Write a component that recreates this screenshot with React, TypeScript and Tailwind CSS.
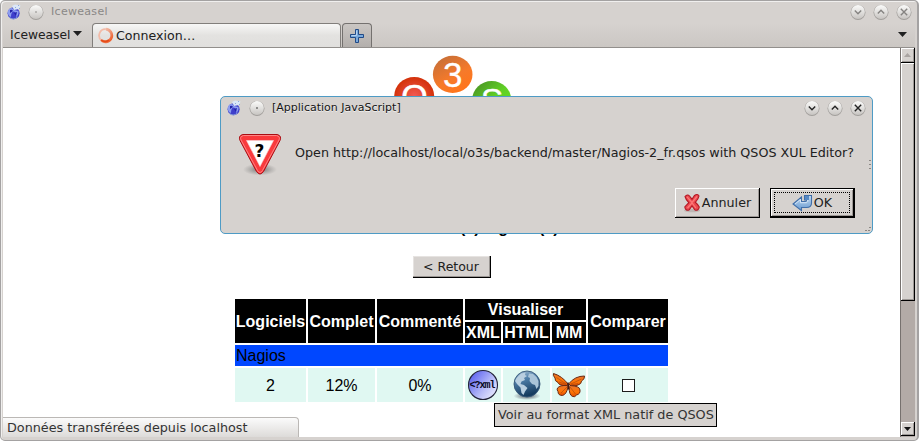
import React from 'react';

const ui = "font-['DejaVu_Sans',sans-serif]";
const arial = "font-['Liberation_Sans',Arial,sans-serif]";

function AppIcon() {
  return (
    <svg className="block shrink-0" width="16" height="16" viewBox="0 0 16 16">
      <circle cx="7.6" cy="9.2" r="6" fill="#3f3fcb" />
      <path d="M1.600 9 Q2 4 6 4 L8 6 L12.500 7 Q13 11 10 13 Q11 8 7.500 7.500 Q5 8 5 13 Q2 12 1.600 9Z" fill="#8c9df0" />
      <path d="M4 6 Q6 5 7 7 L4 9Z M8 9 L11 8 L10 12Z" fill="#2423a9" />
      <path d="M6 2 L9 .5 L14.500 1.500 L13 5 L8 6Z" fill="#dbe7f7" />
      <path d="M9 3h1v1H9zM12 1h1v1h-1zM13 4h1v1h-1z" fill="#8faadb" />
      <path d="M3 13 Q7 17 11.500 13" fill="none" stroke="#8ba0d8" />
    </svg>
  );
}

function Knob({ kind, active }: { kind: 'dot' | 'down' | 'up' | 'close'; active?: boolean }) {
  const c = active ? '#242424' : '#858381';
  const id = `knob-${kind}-${active ? 'a' : 'i'}`;
  return (
    <svg className="block shrink-0" width="16" height="16" viewBox="0 0 16 16">
      <defs>
        <linearGradient id={id} x1="0" y1="0" x2="0" y2="1">
          <stop offset="0" stopColor="#fbfbfa" />
          <stop offset="1" stopColor="#c8c5c2" />
        </linearGradient>
      </defs>
      <circle cx="8" cy="8.4" r="7.5" fill="#a19e9b" />
      <circle cx="8" cy="8" r="6.9" fill={`url(#${id})`} />
      {kind === 'dot' && <circle cx="8" cy="8" r="0.8" fill={c} />}
      {kind === 'down' && <path d="M4.800 6.500 L8 9.700 L11.200 6.500" fill="none" stroke={c} strokeWidth="1.4" />}
      {kind === 'up' && <path d="M4.800 9.500 L8 6.300 L11.200 9.500" fill="none" stroke={c} strokeWidth="1.4" />}
      {kind === 'close' && <path d="M4.800 4.800 L11.200 11.200 M11.200 4.800 L4.800 11.200" fill="none" stroke={c} strokeWidth="1.4" />}
    </svg>
  );
}

function TitleBar() {
  return (
    <div className="flex h-[23px] shrink-0 items-center pl-[3px] pr-[3px]">
      <AppIcon />
      <div className="ml-[6px]"><Knob kind="dot" /></div>
      <span className="ml-[7px] text-[11px] leading-[14px] tracking-[0.3px] text-[#8a8886]">Iceweasel</span>
      <div className="ml-auto flex gap-[7px]">
        <Knob kind="down" /><Knob kind="up" /><Knob kind="close" />
      </div>
    </div>
  );
}

function TabBar() {
  return (
    <div className="flex h-[25px] shrink-0 items-end border-b border-[#928f8c] bg-linear-to-b from-[#d6d2cf] to-[#cbc7c3]">
      <div className="flex h-[24px] w-[89px] items-center pl-[7px]">
        <span className="w-[61px] whitespace-nowrap text-[12.3px] leading-[16px] text-[#202020]">Iceweasel</span>
        <svg width="10" height="6" viewBox="0 0 10 6" className="ml-[2px] mb-[2px]"><path d="M0 0h9L4.5 5z" fill="#202020" /></svg>
      </div>
      <div className="flex h-[24px] w-[249px] items-center rounded-t-[4px] border border-b-0 border-[#817e7b] bg-linear-to-b from-[#f7f7f6] via-[#e3e2e0] to-[#e1e0de] pl-[4px]">
        <svg width="17" height="17" viewBox="0 0 17 17">
          <defs><linearGradient id="spin" x1="0" y1="0" x2="1" y2="1"><stop offset="0" stopColor="#f2cfc3" /><stop offset=".5" stopColor="#ee9b7d" /><stop offset="1" stopColor="#ef4f16" /></linearGradient></defs>
          <path d="M8.8 2.2 A6.3 6.3 0 1 1 4.5 13.4" fill="none" stroke="url(#spin)" strokeWidth="2.8" />
          <path d="M4.5 13.4 A6.3 6.3 0 0 1 8.8 2.2" fill="none" stroke="#f2bba8" strokeWidth="1.8" />
          <path d="M4 13 Q8 16 12 13" fill="none" stroke="#e64c18" strokeWidth="2" />
        </svg>
        <span className="ml-[2px] whitespace-nowrap text-[12.6px] leading-[16px] text-[#202020]">Connexion…</span>
      </div>
      <div className="ml-[1px] flex h-[24px] w-[30px] items-center justify-center rounded-t-[4px] border border-b-0 border-[#74716f] bg-linear-to-b from-[#cac6c3] to-[#b3afac]">
        <svg width="14" height="14" viewBox="0 0 14 14">
          <path d="M5.5 .5h3v5h5v3h-5v5h-3v-5h-5v-3h5z" fill="#79a9dc" stroke="#204a87" />
          <path d="M6.5 1.5v5h-5" fill="none" stroke="#b4d2f2" />
        </svg>
      </div>
      <svg width="9" height="5" viewBox="0 0 9 5" className="mb-[10px] ml-auto mr-[8px]"><path d="M0 0h9L4.5 5z" fill="#202020" /></svg>
    </div>
  );
}

function Logo() {
  return (
    <svg className="block shrink-0" width="120" height="60" viewBox="391 54 120 60">
      <defs>
        <radialGradient id="lr"><stop offset="0" stopColor="#f25a55" /><stop offset="1" stopColor="#d33109" /></radialGradient>
        <linearGradient id="lo" x1="0" y1="0" x2=".6" y2="1"><stop offset="0" stopColor="#bd6d3b" /><stop offset=".65" stopColor="#f67a2a" /><stop offset="1" stopColor="#ff751b" /></linearGradient>
        <linearGradient id="lg" x1="0" y1="0" x2="1" y2="1"><stop offset="0" stopColor="#468a24" /><stop offset=".5" stopColor="#60cf25" /><stop offset="1" stopColor="#67e322" /></linearGradient>
      </defs>
      <ellipse cx="413.2" cy="96" rx="20" ry="19" fill="url(#lr)" />
      <ellipse cx="451.7" cy="74.4" rx="19.8" ry="18.6" fill="url(#lo)" />
      <ellipse cx="490.7" cy="99.5" rx="19.5" ry="18.5" fill="url(#lg)" />
      <g className="font-['Liberation_Sans',Arial,sans-serif]" fill="#fff" textAnchor="middle">
        <text x="413.4" y="107.5" fontSize="34" stroke="#fff" strokeWidth=".5">O</text>
        <text x="451.7" y="87" fontSize="35" stroke="#fff" strokeWidth=".3">3</text>
        <text x="491" y="112" fontSize="34" stroke="#fff" strokeWidth=".3">S</text>
      </g>
    </svg>
  );
}

function XmlIcon() {
  return (
    <svg width="32" height="32" viewBox="0 0 32 32">
      <defs><linearGradient id="xm" x1="0" y1=".1" x2="1" y2=".9"><stop offset="0" stopColor="#5157ee" /><stop offset=".6" stopColor="#b9bdf8" /><stop offset="1" stopColor="#f0f2ff" /></linearGradient></defs>
      <circle cx="16" cy="16" r="14.500" fill="url(#xm)" stroke="#23233a" strokeWidth="1.1" />
      <text x="15.500" y="19" textAnchor="middle" textLength="26" fontSize="10" fontWeight="bold" className="font-['Liberation_Mono',monospace]" fill="#080820">&lt;?xml</text>
    </svg>
  );
}

function GlobeIcon() {
  return (
    <svg width="32" height="32" viewBox="0 0 32 32">
      <defs>
        <linearGradient id="gl" x1="0" y1="0" x2=".3" y2="1"><stop offset="0" stopColor="#a9c3d8" /><stop offset=".4" stopColor="#4e7ea8" /><stop offset="1" stopColor="#153b5e" /></linearGradient>
        <radialGradient id="gs"><stop offset="0" stopColor="#334" stopOpacity=".8" /><stop offset="1" stopColor="#334" stopOpacity="0" /></radialGradient>
      </defs>
      <ellipse cx="16" cy="27" rx="13.500" ry="4" fill="url(#gs)" />
      <circle cx="16" cy="15" r="13" fill="url(#gl)" stroke="#355777" strokeWidth=".9" />
      <path d="M5.500 9 L10 4.500 L14.500 3.500 L14 6 L16 7 L13 9 L14 11 L10.500 12.500 L9.500 15 L13 16 L16.500 19 L14 22.500 L12.500 26 L10.500 24 L9.500 18.500 L6 15 L4 12Z" fill="#b9cfe0" />
      <path d="M18 4.500 L22 5 L25.500 8 L27.500 12 L27.500 17 L25.500 20 L24 16 L21 15 L18.500 12 L19 9 L17 8Z" fill="#a9c4d8" />
    </svg>
  );
}

function ButterflyIcon() {
  return (
    <svg width="34" height="32" viewBox="0 0 34 32" className="shrink-0">
      <defs><linearGradient id="bf" x1="0" y1="0" x2="0" y2="1"><stop offset="0" stopColor="#e9742b" /><stop offset=".6" stopColor="#ff7504" /><stop offset="1" stopColor="#d94800" /></linearGradient></defs>
      <path d="M16 15 Q10 7 1.500 4.500 Q.5 6 3 9 Q2.500 12 6 13.500 Q6.500 16 11 16.500 Q16 17 16 15Z" fill="url(#bf)" stroke="#6b2a14" strokeWidth="1" />
      <path d="M17 14.500 Q23 7 32.500 7 Q33 10 29.500 12 Q29.500 15 26 16 Q22 18 18 16.500Z" fill="url(#bf)" stroke="#6b2a14" strokeWidth="1" />
      <path d="M15.500 16.500 Q8 16 5.500 19 Q4.500 21 6 22.500 Q6 26.500 10.500 26.500 Q14.500 25.500 16 18Z" fill="url(#bf)" stroke="#6b2a14" strokeWidth="1" />
      <path d="M17 17.500 Q17 26 20.500 27.500 Q23 28.500 24.500 26 Q28.500 25 28 21 Q28 17 18 16.500Z" fill="url(#bf)" stroke="#6b2a14" strokeWidth="1" />
      <path d="M4.500 8.500 L14 15 M7 13 L14 15.500 M9 24 L15 18 M29.500 10 L19 15 M26 14.500 L19 16 M23.500 25 L18 18" stroke="#b04a10" strokeWidth=".7" />
      <path d="M16 13.500 L16.700 20.500" stroke="#3f1a12" strokeWidth="1.500" />
    </svg>
  );
}

const head = 'flex items-center justify-center bg-black text-white font-bold whitespace-nowrap';
const cell = 'flex items-center justify-center bg-[#e0f8f2]';

function SoftwareTable() {
  return (
    <div className={`${arial} mt-[21px] grid shrink-0 grid-cols-[71px_67px_86px_36px_47px_34px_80px] grid-rows-[21px_21px_21px_34px] gap-[2px] text-[16px] leading-[18px] text-black`}>
      <div className={`${head} row-span-2 pt-px`}>Logiciels</div>
      <div className={`${head} row-span-2 pt-px`}>Complet</div>
      <div className={`${head} row-span-2 pt-px`}>Commenté</div>
      <div className={`${head} col-span-3`}>Visualiser</div>
      <div className={`${head} row-span-2 pt-px`}>Comparer</div>
      <div className={head}>XML</div>
      <div className={head}>HTML</div>
      <div className={head}>MM</div>
      <div className="col-span-7 flex items-center bg-[#0047ff] pl-px">Nagios</div>
      <div className={`${cell} pt-px`}>2</div>
      <div className={`${cell} pt-px`}>12%</div>
      <div className={`${cell} pt-px`}>0%</div>
      <div className={cell}><XmlIcon /></div>
      <div className={cell}><GlobeIcon /></div>
      <div className={cell}><ButterflyIcon /></div>
      <div className={cell}><span className="block h-[13px] w-[13px] border border-[#1c1c1c] bg-white" /></div>
    </div>
  );
}

function Page() {
  return (
    <div className="flex min-w-0 flex-1 flex-col items-center bg-white pt-[6px]">
      <Logo />
      <h3 className={`${arial} mt-[103px] h-[22px] shrink-0 whitespace-nowrap text-[16px] font-bold leading-[22px] text-black`}>Sélectionnez le(s) logiciel(s)</h3>
      <button className="mt-[17px] h-[22px] w-[78px] shrink-0 border-b border-r border-black bg-[#d6d2cf] text-[12.5px] leading-[18px] text-[#202020] shadow-[inset_-1px_-1px_0_#9a9693,inset_1px_1px_0_#e6e3e1]">&lt; Retour</button>
      <SoftwareTable />
    </div>
  );
}

function ScrollBar() {
  const raised = 'border-b border-r border-black bg-[#d6d2cf] shadow-[inset_1px_1px_0_#fff,inset_-1px_-1px_0_#9d9895]';
  return (
    <div className="flex w-[15px] shrink-0 flex-col border-l border-[#76716e] bg-[#b3aba7]">
      <div className={`${raised} flex h-[15px] items-center justify-center`}>
        <svg width="7" height="4" viewBox="0 0 7 4"><path d="M0 4h7L3.5 0z" fill="#aaa5a2" /></svg>
      </div>
      <div className={`${raised} h-[238px]`} />
      <div className={`${raised} mt-auto mb-px flex h-[14px] items-center justify-center`}>
        <svg width="7" height="4" viewBox="0 0 7 4"><path d="M0 0h7L3.5 4z" fill="#141414" /></svg>
      </div>
    </div>
  );
}

function CancelIcon() {
  return (
    <svg className="shrink-0" width="18" height="20" viewBox="0 0 18 20">
      <ellipse cx="9" cy="17.5" rx="8" ry="1.8" fill="#bdb6b3" />
      <path d="M2 3.500 Q4.500 .8 6.500 3 L9 6.200 L11.500 2.500 Q14.500 .3 16 3 Q15.500 6 12.300 9.300 Q14.500 11 16.300 14 Q15.500 18 12 17 L9 13 L6 17 Q2.500 18 1.800 14 L5.800 9.700 Q3 7 2 3.500Z" fill="#ea4a50" stroke="#b51723" strokeWidth="1.1" />
      <path d="M4 3.800 L9 9.500 L14 3.500 M4.500 15 L9 10 L13 15" fill="none" stroke="#f77" strokeWidth="1.200" />
    </svg>
  );
}

function ReturnIcon() {
  return (
    <svg className="shrink-0" width="21" height="18" viewBox="0 0 21 18">
      <defs><linearGradient id="ret" x1="0" y1="0" x2="0" y2="1"><stop offset="0" stopColor="#c5dcf2" /><stop offset="1" stopColor="#6799d0" /></linearGradient></defs>
      <path d="M12.500 1.500h7V9q0 4.500-5 4.500h-5v3.200L1 10 9.500 3v4.500h4q1 0 1-1.500h-2z" fill="url(#ret)" stroke="#416fa9" strokeWidth="1.1" />
      <path d="M3 10 L8.500 5.500v3.200h6q1.600-.4 1.500-4" fill="none" stroke="#e3effb" strokeWidth=".8" />
      <path d="M13 2h4v4h-4z" fill="#5589c5" />
    </svg>
  );
}

function WarningIcon() {
  return (
    <svg className="shrink-0" width="44" height="44" viewBox="0 0 44 44">
      <defs><radialGradient id="wsh"><stop offset="0" stopColor="#555" stopOpacity=".8" /><stop offset="1" stopColor="#777" stopOpacity="0" /></radialGradient></defs>
      <ellipse cx="22" cy="36.500" rx="17" ry="6" fill="url(#wsh)" />
      <path d="M5 1.500h34q5 1 3 6L25.500 38.500q-3.500 5-7 0L2 7.500q-2-5 3-6Z" fill="#f93a3d" stroke="#a90d13" />
      <path d="M5.500 2.500h33q4 1 2.500 4.500L24.500 37.500q-2.500 4-5 0L3 7q-1.500-3.500 2.500-4.500Z" fill="none" stroke="#ff8c8c" strokeWidth=".9" />
      <path d="M8.500 7.500h27L22 33.500Z" fill="#fff" stroke="#f9d5d5" strokeWidth=".6" />
      <text x="21.500" y="23.500" textAnchor="middle" fontSize="17" fontWeight="bold" className="font-['DejaVu_Sans',sans-serif]" fill="#000">?</text>
    </svg>
  );
}

function Dialog() {
  return (
    <div className="absolute left-[220px] top-[96px] flex h-[138px] w-[653px] flex-col rounded-[5px] border border-[#4e9bc5] bg-[#d6d2cf]">
      <div className="flex h-[21px] items-center pl-[5px] pr-[6px]">
        <AppIcon />
        <div className="ml-[7px]"><Knob kind="dot" active /></div>
        <span className="ml-[7px] whitespace-nowrap text-[11px] leading-[14px] text-[#141414] [text-shadow:0_1px_0_#efedeb]">[Application JavaScript]</span>
        <div className="ml-auto flex gap-[7px]"><Knob kind="down" active /><Knob kind="up" active /><Knob kind="close" active /></div>
      </div>
      <div className="flex pl-[17px] pt-[15px]">
        <WarningIcon />
        <p className="ml-[13px] mt-[11px] whitespace-nowrap text-[12.73px] leading-[18px] text-[#202020]">Open http://localhost/local/o3s/backend/master/Nagios-2_fr.qsos with QSOS XUL Editor?</p>
      </div>
      <div className="mt-[11px] flex justify-end gap-[10px] pr-[17px]">
        <button className="flex h-[30px] w-[85px] items-center justify-center gap-px border-b border-r border-black bg-[#d6d2cf] text-[12.7px] text-[#202020] shadow-[inset_1px_1px_0_#fff,inset_-1px_-1px_0_#9d9895]"><CancelIcon />Annuler</button>
        <button className="h-[30px] w-[85px] border border-b-2 border-r-2 border-black bg-[#d6d2cf] p-[3px] text-[12.7px] text-[#202020] shadow-[inset_1px_1px_0_#fff,inset_-1px_-1px_0_#9d9895]">
          <span className="flex h-full items-center justify-center gap-px border border-dotted border-black"><ReturnIcon />OK</span>
        </button>
      </div>
      <svg className="absolute bottom-0 right-0" width="8" height="74" viewBox="0 0 8 74"><path d="M5 5h2v1H5zM5 9h2v1H5zM5 1h2v1H5zM5 68h2v1H5zM1 71h2v1H1zM4 71h2v1H4z" fill="#8b8784" /></svg>
    </div>
  );
}

export default function App() {
  return (
    <div className={`${ui} relative flex h-[441px] w-[920px] overflow-hidden bg-white`}>
      <div className="flex h-[441px] w-[919px] flex-col rounded-[5px] border border-r-2 border-[#a4a2a2] bg-[#d6d2cf] pl-[2px] pr-[2px] shadow-[inset_1px_1px_0_#f0efee]">
        <div className="-mt-px flex flex-col"><TitleBar /><TabBar /></div>
        <div className="flex h-[389px]">
          <Page />
          <ScrollBar />
        </div>
      </div>
      <Dialog />
      <div className="absolute left-[494px] top-[403px] h-[24px] w-[223px] whitespace-nowrap border border-black bg-[#d6d2cf] pl-[3px] text-[12.8px] leading-[22px] text-[#333]">Voir au format XML natif de QSOS</div>
      <div className="absolute left-[3px] top-[417px] h-[20px] w-[296px] whitespace-nowrap rounded-tr-[4px] border-r border-t border-[#bbb8b5] bg-linear-to-b from-[#fbfbfb] to-[#dddbd9] pl-[4px] text-[12.78px] leading-[20px] text-[#333]">Données transférées depuis localhost</div>
    </div>
  );
}
